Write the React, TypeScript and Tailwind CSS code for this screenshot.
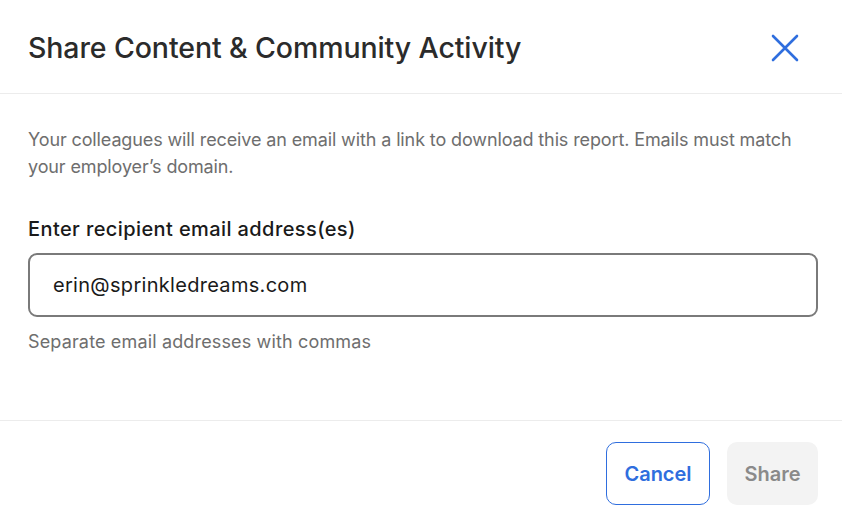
import { useState } from 'react';

export default function App() {
  const [emails, setEmails] = useState('erin@sprinkledreams.com');

  return (
    <div className="w-[842px] h-[520px] bg-white flex flex-col font-['Inter',sans-serif]">
      {/* header */}
      <div className="h-[94px] flex items-center justify-between pl-[28px] pr-[43px] pt-[3px] border-b border-[#ececec]">
        <h1 className="text-[28.5px] font-medium tracking-[-0.1px] text-[#2b2b2b]">Share Content &amp; Community Activity</h1>
        <button className="w-[28px] h-[28px] flex items-center justify-center text-[#2f6ede]">
          <svg width="28" height="28" viewBox="0 0 28 28" fill="none" stroke="currentColor" strokeWidth="2.6" strokeLinecap="round">
            <path d="M2 2L26 26M26 2L2 26" />
          </svg>
        </button>
      </div>

      {/* body */}
      <div className="flex-1 pl-[28px] pr-[24px] pt-[32px]">
        <p className="text-[18px] leading-[27px] tracking-[-0.12px] text-[#6e6e6e]">
          Your colleagues will receive an email with a link to download this report. Emails must match your employer’s domain.
        </p>
        <label className="block mt-[34px] text-[20px] font-medium tracking-[0.4px] text-[#1a1a1a]">Enter recipient email address(es)</label>
        <input
          value={emails}
          onChange={(e) => setEmails(e.target.value)}
          className="mt-[9px] w-full h-[64px] px-[23px] rounded-[9px] border-2 border-[#7a7a7a] text-[20px] tracking-[0.3px] text-[#1a1a1a] outline-none"
        />
        <p className="mt-[11px] text-[18px] tracking-[0.15px] text-[#6e6e6e]">Separate email addresses with commas</p>
      </div>

      {/* footer */}
      <div className="h-[100px] border-t border-[#ececec] flex items-center justify-end gap-[17px] pr-[24px] pt-[6px]">
        <button className="w-[104px] h-[63px] rounded-[10px] border border-[#2f6ede] text-[#2f6ede] text-[20px] font-semibold">Cancel</button>
        <button disabled className="w-[91px] h-[63px] rounded-[10px] bg-[#f3f3f3] text-[#8a8a8a] text-[20px] font-semibold">Share</button>
      </div>
    </div>
  );
}
